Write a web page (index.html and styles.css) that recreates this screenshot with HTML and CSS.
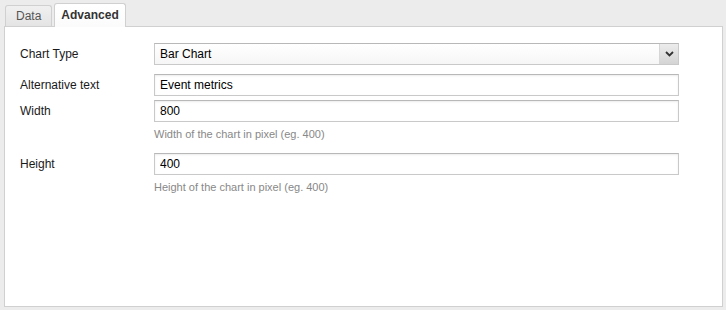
FILE: index.html
```html
<!DOCTYPE html>
<html lang="en">
<head>
    <meta charset="UTF-8">
    <title>Chart Properties</title>
    <link rel="stylesheet" href="styles.css">
</head>
<body>
    <div class="dialog">
        <div class="tabs">
            <div class="tab">Data</div>
            <div class="tab active">Advanced</div>
        </div>
        <div class="panel">
            <div class="row">
                <label>Chart Type</label>
                <div class="field">
                    <div class="select">
                        <span>Bar Chart</span>
                        <span class="select-btn">
                            <svg width="9" height="6" viewBox="0 0 9 6"><path d="M1 1 L4.5 4.5 L8 1" fill="none" stroke="#333" stroke-width="1.8"/></svg>
                        </span>
                    </div>
                </div>
            </div>
            <div class="row row-alt">
                <label>Alternative text</label>
                <div class="field">
                    <input type="text" value="Event metrics">
                </div>
            </div>
            <div class="row row-width">
                <label>Width</label>
                <div class="field">
                    <input type="text" value="800">
                    <p class="help">Width of the chart in pixel (eg. 400)</p>
                </div>
            </div>
            <div class="row row-height">
                <label>Height</label>
                <div class="field">
                    <input type="text" value="400">
                    <p class="help">Height of the chart in pixel (eg. 400)</p>
                </div>
            </div>
        </div>
    </div>
</body>
</html>
```

FILE: styles.css
```css
body {
    margin: 0;
    background-color: #ececec;
    font-family: "Liberation Sans", Arial, sans-serif;
    font-size: 12px;
    color: #1a1a1a;
}
.dialog {
    padding: 3px 3px 3px 4px;
}
.tabs {
    display: flex;
    align-items: flex-end;
    gap: 2px;
    padding-left: 1px;
    height: 23px;
}
.tab {
    height: 20px;
    line-height: 20px;
    padding: 0 10px;
    border: 1px solid #d0d0d0;
    border-bottom: none;
    border-radius: 3px 3px 0 0;
    background: linear-gradient(#f0f0f0, #e4e4e4);
    color: #555;
}
.tab.active {
    height: 23px;
    line-height: 22px;
    margin-bottom: -1px;
    position: relative;
    background: linear-gradient(#ffffff, #fbfbfb);
    color: #333;
    font-weight: bold;
    padding: 0 6px;
}
.panel {
    background-color: #fff;
    border: 1px solid #d0d0d0;
    height: 263px;
    padding: 16px 15px 0 15px;
}
.row {
    display: grid;
    grid-template-columns: 134px 525px;
    align-items: start;
}
.row label {
    line-height: 22px;
}
.row-alt {
    margin-top: 9px;
}
.row-width {
    margin-top: 4px;
}
.row-height {
    margin-top: 11px;
}
input {
    display: block;
    box-sizing: border-box;
    width: 100%;
    height: 22px;
    margin: 0;
    padding: 0 5px;
    border: 1px solid #c9c9c9;
    border-top-color: #b8b8b8;
    box-shadow: inset 0 1px 2px rgba(0, 0, 0, 0.08);
    font-family: inherit;
    font-size: 12px;
    color: #000;
}
.select {
    box-sizing: border-box;
    height: 22px;
    display: flex;
    align-items: center;
    justify-content: space-between;
    padding-left: 5px;
    border: 1px solid #c9c9c9;
    border-top-color: #b8b8b8;
    background: linear-gradient(#ffffff, #f6f6f6);
    color: #000;
}
.select-btn {
    width: 18px;
    height: 20px;
    display: flex;
    align-items: center;
    justify-content: center;
    border-left: 1px solid #d6d6d6;
    background: linear-gradient(#ececec, #d4d4d4);
}
.help {
    margin: 4px 0 0 0;
    line-height: 16px;
    font-size: 11px;
    color: #888;
}
```
